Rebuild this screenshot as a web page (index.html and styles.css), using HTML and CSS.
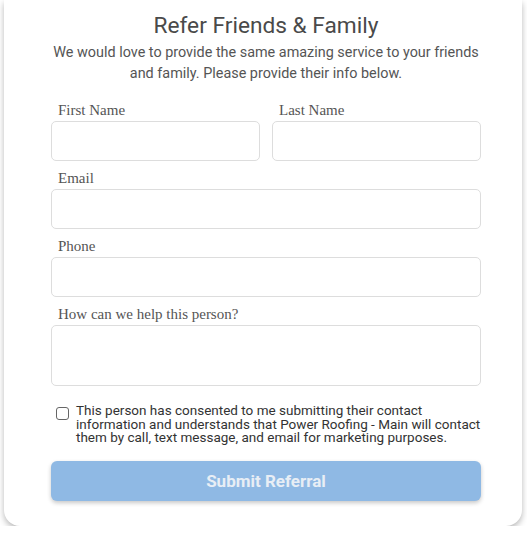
FILE: index.html
```html
<!DOCTYPE html>
<html lang="en">

<head>
    <meta charset="UTF-8">
    <meta name="viewport" content="width=device-width, initial-scale=1.0">
    <title>Refer Friends &amp; Family</title>
    <link rel="stylesheet" href="styles.css">
</head>

<body>
    <div class="card">
        <h1>Refer Friends &amp; Family</h1>
        <p class="intro">We would love to provide the same amazing service to your friends and family. Please provide their info below.</p>

        <form class="referral">
            <div class="row two">
                <div class="field">
                    <label for="first">First Name</label>
                    <input type="text" id="first">
                </div>
                <div class="field">
                    <label for="last">Last Name</label>
                    <input type="text" id="last">
                </div>
            </div>

            <div class="field">
                <label for="email">Email</label>
                <input type="email" id="email">
            </div>

            <div class="field">
                <label for="phone">Phone</label>
                <input type="tel" id="phone">
            </div>

            <div class="field">
                <label for="help">How can we help this person?</label>
                <textarea id="help"></textarea>
            </div>

            <label class="consent">
                <input type="checkbox">
                <span>This person has consented to me submitting their contact information and understands that Power Roofing - Main will contact them by call, text message, and email for marketing purposes.</span>
            </label>

            <button type="submit" class="submit" disabled>Submit Referral</button>
        </form>
    </div>
</body>

</html>
```

FILE: styles.css
```css
body {
    margin: 0;
    background-color: #fff;
    font-family: Roboto, "Liberation Sans", Arial, sans-serif;
}

.card {
    width: 518px;
    margin: 0 4px;
    box-sizing: border-box;
    padding: 10px 41px 25px 47px;
    background-color: #fff;
    border-radius: 0 0 16px 16px;
    box-shadow: 0 3px 6px rgba(0, 0, 0, 0.28);
}

h1 {
    margin: 0;
    font-size: 22.7px;
    font-weight: 400;
    line-height: 32px;
    color: #4a4a4a;
    text-align: center;
}

.intro {
    margin: 0 0 16px;
    font-size: 14.4px;
    line-height: 21px;
    color: #555;
    text-align: center;
}

.row.two {
    display: grid;
    grid-template-columns: 1fr 1fr;
    gap: 12px;
}

.field {
    margin-bottom: 7px;
}

.field label {
    display: block;
    padding-left: 7px;
    font-family: "Liberation Serif", "Times New Roman", serif;
    font-size: 15px;
    line-height: 21px;
    color: #555;
}

.field input,
.field textarea {
    display: block;
    width: 100%;
    box-sizing: border-box;
    height: 40px;
    border: 1px solid #ddd;
    border-radius: 5px;
    background-color: #fff;
    font-size: 15px;
}

.field textarea {
    height: 61px;
    resize: none;
}

.consent {
    display: flex;
    align-items: flex-start;
    gap: 7px;
    margin: 18px -6px 16px 5px;
    font-size: 13.5px;
    line-height: 13.5px;
    color: #333;
}

.consent input {
    appearance: none;
    flex: none;
    width: 13px;
    height: 13px;
    margin: 3px 0 0;
    border: 1px solid #666;
    border-radius: 3px;
}

.submit {
    display: block;
    width: 100%;
    height: 40px;
    border: none;
    border-radius: 6px;
    background-color: #8fb9e4;
    color: #e8eef5;
    font-family: Roboto, "Liberation Sans", Arial, sans-serif;
    font-size: 17px;
    font-weight: 700;
    box-shadow: 0 2px 4px rgba(0, 0, 0, 0.22);
}
```
